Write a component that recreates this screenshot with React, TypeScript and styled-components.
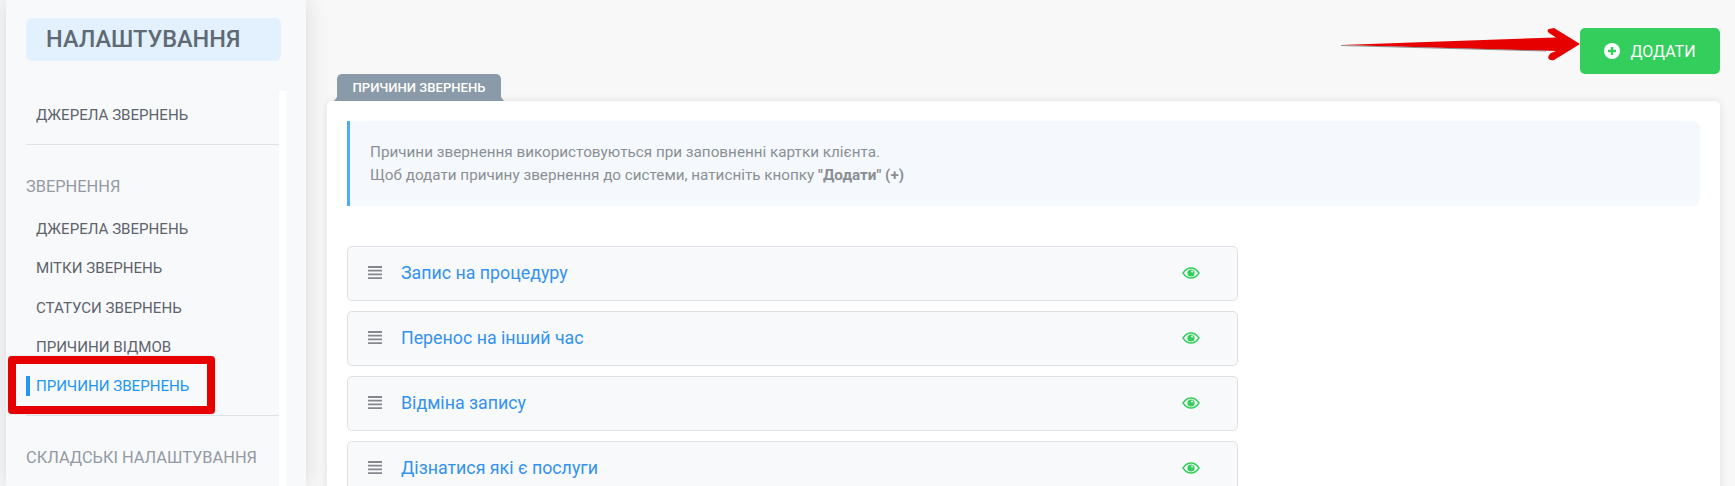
import React from "react";
import styled, { createGlobalStyle } from "styled-components";

const Global = createGlobalStyle`
  html, body { margin: 0; padding: 0; height: 486px; overflow: hidden; background: #f8f8f8; }
  body { font-family: Roboto, "Liberation Sans", sans-serif; }
  #root { height: 486px; }
`;

const Page = styled.div`
  position: relative;
  display: flex;
  height: 486px;
  overflow: hidden;
  background: #f8f8f8;
`;

const Sidebar = styled.aside`
  flex: 0 0 300px;
  margin-left: 6px;
  height: 486px;
  background: #f8f9fb;
  box-shadow: 0 0 22px rgba(0, 0, 0, 0.13);
  padding: 18px 0 0 20px;
  box-sizing: border-box;
  overflow: hidden;
`;

const TitleBadge = styled.h1`
  width: 255px;
  height: 43px;
  margin: 0 0 30px;
  padding-left: 20px;
  box-sizing: border-box;
  display: flex;
  align-items: center;
  background: #e2f1fd;
  border-radius: 6px;
  color: #5f6a75;
  font-size: 23.5px;
  font-weight: 500;
  line-height: 1;
`;

const NavScroll = styled.nav`
  width: 253px;
  height: 395px;
  padding-top: 4px;
  border-right: 7px solid #ffffff;
  box-sizing: content-box;
`;

const NavItem = styled.div<{ $active?: boolean }>`
  position: relative;
  height: 39.3px;
  display: flex;
  align-items: center;
  padding-left: 10px;
  font-size: 15.1px;
  color: ${(p) => (p.$active ? "#2196f3" : "#5d646c")};
  &::before {
    content: "";
    display: ${(p) => (p.$active ? "block" : "none")};
    position: absolute;
    left: 0;
    top: 10px;
    width: 4px;
    height: 20px;
    background: #2196f3;
  }
`;

const NavDivider = styled.hr<{ $top: number }>`
  border: none;
  border-top: 1px solid #dfe2e7;
  margin: ${(p) => p.$top}px 0 32px;
  height: 0;
`;

const SectionLabel = styled.div`
  font-size: 16.4px;
  line-height: 20px;
  color: #939aa3;
  margin-bottom: 12px;
`;

const Main = styled.main`
  flex: 1;
  min-width: 0;
  padding: 28px 15px 0 21px;
  display: flex;
  flex-direction: column;
`;

const Toolbar = styled.div`
  display: flex;
  flex: none;
  justify-content: flex-end;
  height: 46px;
`;

const AddButton = styled.button`
  width: 140px;
  height: 46px;
  display: flex;
  align-items: center;
  justify-content: center;
  gap: 10px;
  border: none;
  border-radius: 5px;
  background: #34ce5c;
  color: #ffffff;
  font-family: inherit;
  font-size: 16px;
  padding: 0;
`;

const Tab = styled.div`
  position: relative;
  flex: none;
  align-self: flex-start;
  margin: 0 0 0 10px;
  width: 164px;
  height: 27px;
  box-sizing: border-box;
  background: #8a9aa8;
  border-radius: 5px 5px 0 0;
  color: #ffffff;
  font-size: 13.1px;
  font-weight: 500;
  display: flex;
  align-items: center;
  justify-content: center;
  &::before, &::after {
    content: "";
    position: absolute;
    bottom: 0;
    border-bottom: 4px solid #8a9aa8;
  }
  &::before { left: -3px; border-left: 3px solid transparent; }
  &::after { right: -3px; border-right: 3px solid transparent; }
`;

const Panel = styled.section`
  flex: none;
  height: 400px;
  background: #ffffff;
  border-radius: 5px 5px 0 0;
  box-shadow: 0 0 8px rgba(0, 0, 0, 0.1);
  padding: 20px 20px 0;
`;

const Notice = styled.div`
  height: 85px;
  box-sizing: border-box;
  padding: 20px 20px 0 20px;
  background: #f5f9fd;
  border-left: 3px solid #4dabf7;
  border-radius: 0 8px 8px 0;
  font-size: 15.25px;
  line-height: 23px;
  color: #8b8f94;
  margin-bottom: 40px;
  b { font-weight: 700; }
`;

const RowList = styled.div`
  display: flex;
  flex-direction: column;
  gap: 10px;
  width: 891px;
`;

const ReasonRow = styled.div`
  height: 55px;
  box-sizing: border-box;
  flex: none;
  display: grid;
  grid-template-columns: 33px 1fr 18px;
  align-items: center;
  padding: 0 37px 2px 20px;
  background: #f8f9fb;
  border: 1px solid #dfe1e6;
  border-radius: 5px;
`;

const Name = styled.span`
  font-size: 17.8px;
  color: #3392f0;
`;

const Drag = styled.svg`
  display: block;
`;

const Overlay = styled.svg`
  position: absolute;
  left: 0;
  top: 0;
  pointer-events: none;
`;

const Highlight = styled.div`
  position: absolute;
  left: 8px;
  top: 356px;
  width: 207px;
  height: 58px;
  box-sizing: border-box;
  border: 8px solid #e60000;
  border-radius: 4px;
  box-shadow: 0 0 1px rgba(0, 0, 0, 0.5);
  pointer-events: none;
`;

const reasons = ["Запис на процедуру", "Перенос на інший час", "Відміна запису", "Дізнатися які є послуги"];

const DragIcon = () => (
  <Drag width="14" height="14" viewBox="0 0 14 14">
    <path d="M0 1h14M0 4.7h14M0 8.4h14M0 12.1h14" stroke="#84888d" strokeWidth="1.8" />
  </Drag>
);

const PlusIcon = () => (
  <svg width="16" height="16" viewBox="0 0 16 16">
    <circle cx="8" cy="8" r="8" fill="#fff" />
    <path d="M8 4v8M4 8h8" stroke="#34ce5c" strokeWidth="2.4" />
  </svg>
);

const EyeIcon = () => (
  <svg width="18" height="12" viewBox="0 0 18 12">
    <path d="M1 6 C4 1.5 6.5 1 9 1 C11.5 1 14 1.5 17 6 C14 10.5 11.5 11 9 11 C6.5 11 4 10.5 1 6 Z" fill="none" stroke="#34ce5c" strokeWidth="1.4" />
    <circle cx="9" cy="6" r="3.6" fill="#34ce5c" />
    <circle cx="10.2" cy="4.6" r="1" fill="#f7f8fa" />
  </svg>
);

export default function App() {
  return (
    <Page>
      <Global />
      <Sidebar>
        <TitleBadge>НАЛАШТУВАННЯ</TitleBadge>
        <NavScroll>
          <NavItem>ДЖЕРЕЛА ЗВЕРНЕНЬ</NavItem>
          <NavDivider $top={10} />
          <SectionLabel>ЗВЕРНЕННЯ</SectionLabel>
          <NavItem>ДЖЕРЕЛА ЗВЕРНЕНЬ</NavItem>
          <NavItem>МІТКИ ЗВЕРНЕНЬ</NavItem>
          <NavItem>СТАТУСИ ЗВЕРНЕНЬ</NavItem>
          <NavItem>ПРИЧИНИ ВІДМОВ</NavItem>
          <NavItem $active>ПРИЧИНИ ЗВЕРНЕНЬ</NavItem>
          <NavDivider $top={9} />
          <SectionLabel>СКЛАДСЬКІ НАЛАШТУВАННЯ</SectionLabel>
        </NavScroll>
      </Sidebar>
      <Main>
        <Toolbar>
          <AddButton>
            <PlusIcon />
            ДОДАТИ
          </AddButton>
        </Toolbar>
        <Tab>ПРИЧИНИ ЗВЕРНЕНЬ</Tab>
        <Panel>
          <Notice>
            Причини звернення використовуються при заповненні картки клієнта.
            <br />
            Щоб додати причину звернення до системи, натисніть кнопку <b>"Додати" (+)</b>
          </Notice>
          <RowList>
            {reasons.map((r) => (
              <ReasonRow key={r}>
                <DragIcon />
                <Name>{r}</Name>
                <EyeIcon />
              </ReasonRow>
            ))}
          </RowList>
        </Panel>
      </Main>
      <Highlight />
      <Overlay width="1735" height="486" viewBox="0 0 1735 486">
        <path d="M1341 45 L1556 37.5 L1549 33 Q1546 30 1549 29 L1554 28 L1580 44 L1554 60 Q1550 61 1548 58 Q1548 55 1551 53 L1556 51 Z" fill="#e60000" />
        <path d="M1341 45.5 L1546 51" stroke="#777" strokeWidth="0.8" fill="none" />
      </Overlay>
    </Page>
  );
}
